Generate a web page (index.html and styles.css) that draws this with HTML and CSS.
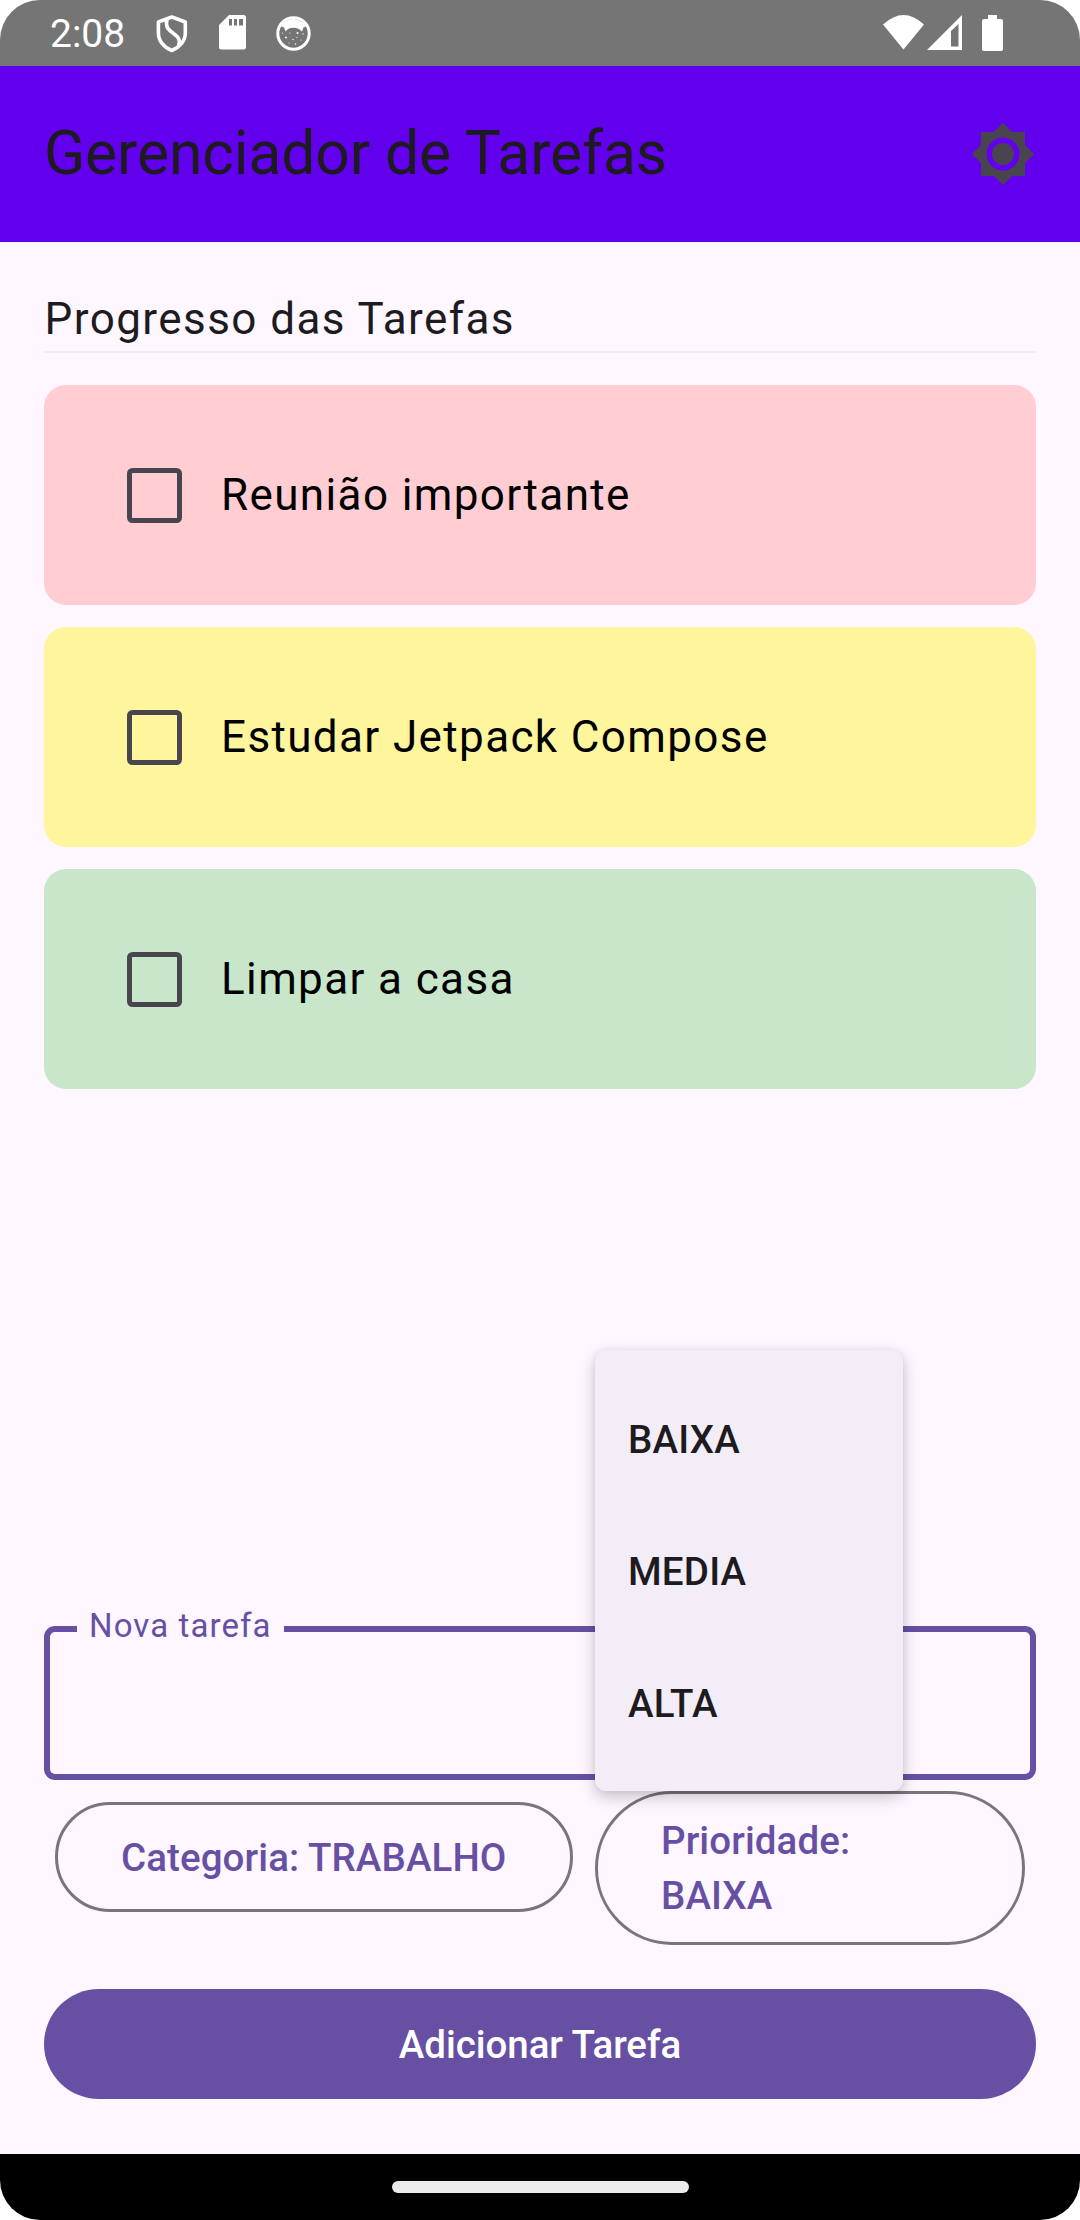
FILE: index.html
```html
<!DOCTYPE html>
<html lang="pt-BR">
<head>
<meta charset="utf-8">
<title>Gerenciador de Tarefas</title>
<link rel="stylesheet" href="styles.css">
</head>
<body>
<div class="phone">
  <div class="status-bar">
    <span class="clock">2:08</span>
    <div class="status-left">
      <svg width="32" height="38" viewBox="0 0 31 38" fill="none" stroke="#fff" stroke-width="3.6" stroke-linejoin="round"><path d="M15.3 2 28.8 7V18C28.8 26 23 32.5 15.3 35.5 7.500 32.500 1.900 26 1.900 18V7Z"/><path d="M10.500 4.500C8.500 12 12 15 17 18.500 22.500 22.500 24 25 22 30.500"/></svg>
      <svg width="27" height="35" viewBox="0 0 27 35"><path fill="#fff" fill-rule="evenodd" d="M10 0H24.500Q27 0 27 2.500V32Q27 34.500 24.500 34.500H2.500Q0 34.500 0 32V10ZM10 4V10.500H13V4ZM15 4V10.500H18V4ZM20 4V10.500H24V4Z"/></svg>
      <svg class="face" width="35" height="35" viewBox="0 0 35 35"><circle cx="17.500" cy="17.500" r="15.700" fill="none" stroke="#fff" stroke-width="3"/><path fill="#fff" d="M4 10Q17 -4 31 10L27.500 11.500 26 15.500 23 13Q17.500 10.500 12 13L9.500 15.500 8 11.500Z"/><g fill="#fff"><circle cx="6.500" cy="17" r=".6"/><circle cx="10" cy="21.500" r="1"/><circle cx="14" cy="17" r=".6"/><circle cx="17" cy="23.500" r=".7"/><circle cx="21.500" cy="17" r="1"/><circle cx="27" cy="18" r=".7"/><circle cx="25" cy="24" r=".6"/><circle cx="19.500" cy="28" r=".7"/><circle cx="13" cy="27" r=".6"/><circle cx="21" cy="21.500" r=".6"/></g></svg>
    </div>
    <div class="status-right">
      <svg width="41" height="35" viewBox="0 0 41 35"><path fill="#fff" d="M0 9.500Q20.500 -9.500 41 9.500L20.500 34.500Z"/></svg>
      <svg class="signal" width="35" height="35" viewBox="0 0 35 35"><path fill="#fff" fill-rule="evenodd" d="M35 0V35H0ZM31.500 9 24 16V31.500H31.500Z"/></svg>
      <svg class="battery" width="21" height="36" viewBox="0 0 21 36"><path fill="#fff" d="M6 0H15V4H19Q21 4 21 6V34Q21 36 19 36H2Q0 36 0 34V6Q0 4 2 4H6Z"/></svg>
    </div>
  </div>

  <header class="app-bar">
    <h1 class="app-title">Gerenciador de Tarefas</h1>
    <svg width="66" height="66" viewBox="0 0 24 24"><path fill="#49454f" d="M20 8.690V4h-4.690L12 .69 8.690 4H4v4.690L.69 12 4 15.310V20h4.690L12 23.310 15.310 20H20v-4.690L23.310 12 20 8.690zM12 18c-3.310 0-6-2.690-6-6s2.690-6 6-6 6 2.690 6 6-2.690 6-6 6zm0-10c-2.210 0-4 1.790-4 4s1.790 4 4 4 4-1.790 4-4-1.790-4-4-4z"/></svg>
  </header>

  <main class="content">
    <h2 class="section-title">Progresso das Tarefas</h2>
    <ul class="tasks">
      <li class="task task-high"><span class="checkbox"></span>Reunião importante</li>
      <li class="task task-medium"><span class="checkbox"></span>Estudar Jetpack Compose</li>
      <li class="task task-low"><span class="checkbox"></span>Limpar a casa</li>
    </ul>

    <div class="form">
      <div class="text-field"><span class="field-label">Nova tarefa</span></div>
      <div class="selectors">
        <div class="outlined category">Categoria: TRABALHO</div>
        <div class="priority">
          <div class="outlined">Prioridade: BAIXA</div>
          <ul class="menu">
            <li class="menu-item">BAIXA</li>
            <li class="menu-item">MEDIA</li>
            <li class="menu-item">ALTA</li>
          </ul>
        </div>
      </div>
      <div class="add-button">Adicionar Tarefa</div>
    </div>
  </main>

  <div class="nav-bar"><span class="nav-handle"></span></div>
</div>
</body>
</html>
```
FILE: styles.css
```css
* { box-sizing: border-box; margin: 0; padding: 0; }
body { background: #fff; font-family: Roboto, sans-serif; }
ul { list-style: none; }
svg { display: block; flex: none; }

.phone {
  display: flex;
  flex-direction: column;
  width: 1080px;
  height: 2220px;
  border-radius: 40px;
  overflow: hidden;
  background: #fef7ff;
  color: #1d1b20;
}

.status-bar {
  display: flex;
  height: 66px;
  padding: 0 77px 0 50px;
  background: #757575;
  color: #fff;
}
.clock { width: 106px; font-size: 39px; line-height: 69px; }
.status-left { display: flex; gap: 31px; padding-top: 15px; }
.face { margin: 1px 0 0 -1px; }
.status-right { display: flex; margin-left: auto; padding-top: 15px; }
.signal { margin-left: 3px; }
.battery { margin-left: 20px; }

.app-bar {
  display: flex;
  align-items: center;
  justify-content: space-between;
  height: 176px;
  padding: 0 44px;
  background: #6200ee;
}
.app-title { font-size: 60.5px; font-weight: 400; letter-spacing: -0.1px; line-height: 77px; margin-top: -2px; }

.content {
  display: flex;
  flex-direction: column;
  flex: 1;
  padding: 44px 44px 55px;
}
.section-title {
  height: 67px;
  padding-left: 0.6px;
  border-bottom: 2px solid #f1eafa;
  font-size: 44px;
  font-weight: 400;
  letter-spacing: 1.43px;
  line-height: 66px;
}

.tasks { display: flex; flex-direction: column; gap: 22px; margin-top: 32px; }
.task {
  display: flex;
  align-items: center;
  gap: 39px;
  height: 220px;
  padding-left: 83px;
  border-radius: 22px;
  color: #000;
  font-size: 44px;
  letter-spacing: 1.375px;
}
.task-high { background: #ffcdd2; }
.task-medium { background: #fff59d; }
.task-low { background: #c8e6c9; }
.checkbox {
  width: 55px;
  height: 55px;
  border: 5px solid #49454f;
  border-radius: 5.5px;
}

.form { margin-top: auto; }
.text-field {
  height: 154px;
  padding-left: 27px;
  border: 6px solid #6750a4;
  border-radius: 11px;
}
.field-label {
  display: block;
  width: 207px;
  height: 44px;
  margin-top: -28px;
  padding-left: 12px;
  background: #fef7ff;
  color: #6750a4;
  font-size: 33px;
  letter-spacing: 1.1px;
  line-height: 44px;
}

.selectors {
  display: flex;
  align-items: flex-start;
  gap: 22px;
  padding: 11px 11px 44px;
}
.outlined {
  padding: 24.5px 63px;
  border: 3px solid #79747e;
  border-radius: 77px;
  color: #6750a4;
  font-size: 38.5px;
  font-weight: 500;
  letter-spacing: 0.09px;
  line-height: 55px;
}
.category { width: 518px; margin-top: 11px; white-space: nowrap; }
.priority { position: relative; width: 430px; }
.priority .outlined { padding: 19px 63px; width: 430px; }
.menu {
  position: absolute;
  left: 0;
  bottom: 100%;
  width: 308px;
  padding: 23px 0 22px;
  border-radius: 11px;
  background: #f3edf7;
  box-shadow: 0 6px 16px rgba(0, 0, 0, .22), 0 0 6px rgba(0, 0, 0, .06);
}
.menu-item {
  height: 132px;
  padding-left: 33px;
  font-size: 38.5px;
  font-weight: 500;
  letter-spacing: 0.2px;
  line-height: 133px;
}

.add-button {
  height: 110px;
  border-radius: 55px;
  background: #6750a4;
  color: #fff;
  font-size: 38.5px;
  font-weight: 500;
  letter-spacing: -0.05px;
  line-height: 112px;
  text-align: center;
}

.nav-bar {
  display: flex;
  align-items: center;
  justify-content: center;
  height: 66px;
  background: #000;
}
.nav-handle { width: 297px; height: 12px; border-radius: 6px; background: #ebebeb; }
```
